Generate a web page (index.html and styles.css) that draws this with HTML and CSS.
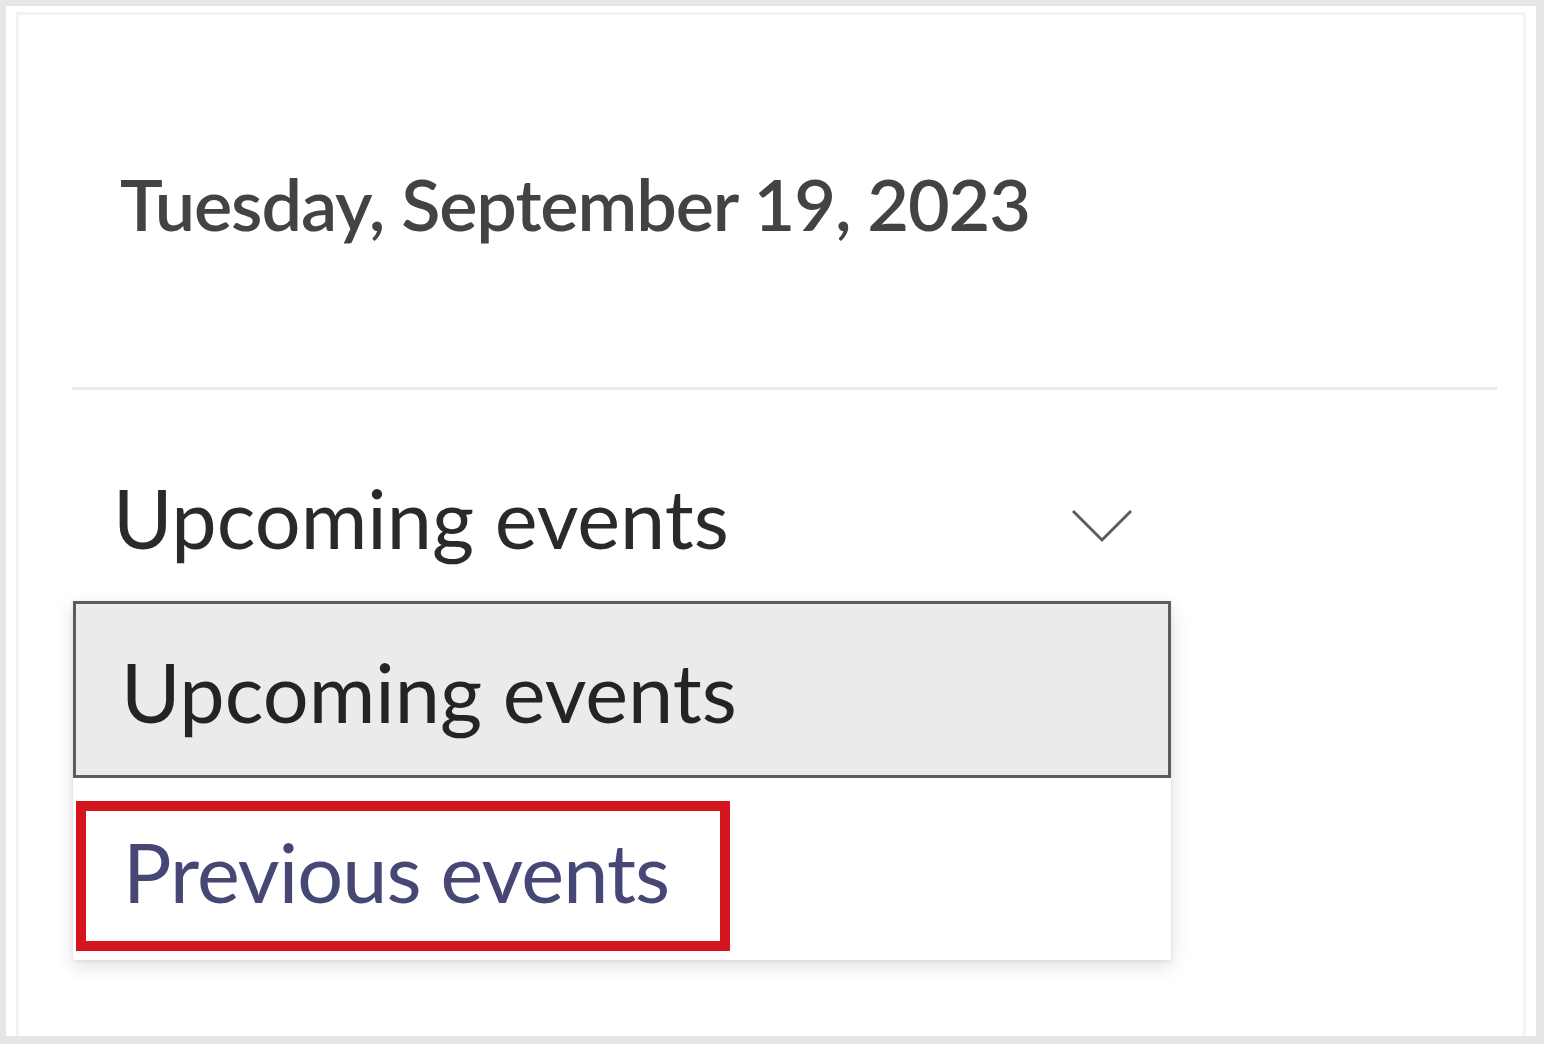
FILE: index.html
```html
<!DOCTYPE html>
<html lang="en">
<head>
<meta charset="utf-8">
<title>Events</title>
<link rel="stylesheet" href="styles.css">
</head>
<body>
<div class="frame">
  <div class="panel">
    <header class="date-row">
      <h1 class="date">Tuesday, September 19, 2023</h1>
    </header>
    <hr class="divider">
    <div class="picker">
      <div class="picker-head">
        <span class="picker-label">Upcoming events</span>
        <svg class="chevron" width="62" height="36" viewBox="0 0 62 36" aria-hidden="true">
          <polyline points="2,3 31,32 60,3" fill="none" stroke="#605e5c" stroke-width="3"/>
        </svg>
      </div>
      <ul class="menu">
        <li class="menu-item selected">Upcoming events</li>
        <li class="menu-item plain"><span class="highlight">Previous events</span></li>
      </ul>
    </div>
  </div>
</div>
</body>
</html>
```
FILE: styles.css
```css
html, body {
  margin: 0;
  padding: 0;
  background: #ffffff;
}

body {
  font-family: "Lato", "Open Sans", sans-serif;
}

.frame {
  box-sizing: border-box;
  width: 1544px;
  height: 1044px;
  border: 6px solid #e6e6e6;
  border-right-width: 8px;
  border-bottom-width: 8px;
  padding: 6px 10px 0 10px;
  background: #ffffff;
}

.panel {
  box-sizing: border-box;
  height: 100%;
  border: 3px solid #f3f3f3;
  border-bottom: none;
  padding: 0 26px 0 53px;
  display: flex;
  flex-direction: column;
}

.date-row {
  padding: 151px 0 0 48px;
}

.date {
  margin: 0;
  font-size: 72px;
  line-height: 74px;
  font-weight: 600;
  letter-spacing: -1.1px;
  color: #434343;
}

.divider {
  margin: 147px 0 0 0;
  height: 3px;
  border: none;
  background: #ebebeb;
}

.picker {
  margin-top: 87px;
  width: 1099px;
}

.picker-head {
  display: flex;
  align-items: center;
  justify-content: space-between;
  padding: 0 38px 0 41px;
}

.picker-label {
  font-size: 81px;
  line-height: 81px;
  color: #2b2a29;
}

.chevron {
  display: block;
  margin-top: 16px;
}

.menu {
  list-style: none;
  margin: 43px 0 0 1px;
  padding: 0;
  width: 1098px;
  background: #ffffff;
  box-shadow: 0 6px 18px rgba(0, 0, 0, 0.13), 0 1px 4px rgba(0, 0, 0, 0.08);
}

.menu-item {
  box-sizing: border-box;
  font-size: 81px;
  line-height: 81px;
}

.selected {
  height: 177px;
  padding: 47px 0 0 45px;
  background: #ebebeb;
  border: 3px solid #5c5c5c;
  color: #252423;
}

.plain {
  height: 182px;
  padding: 23px 0 0 3px;
}

.highlight {
  display: block;
  box-sizing: border-box;
  width: 654px;
  height: 150px;
  padding: 20px 0 0 37px;
  border: 10px solid #d4151d;
  color: #464775;
  letter-spacing: -0.9px;
}
```
